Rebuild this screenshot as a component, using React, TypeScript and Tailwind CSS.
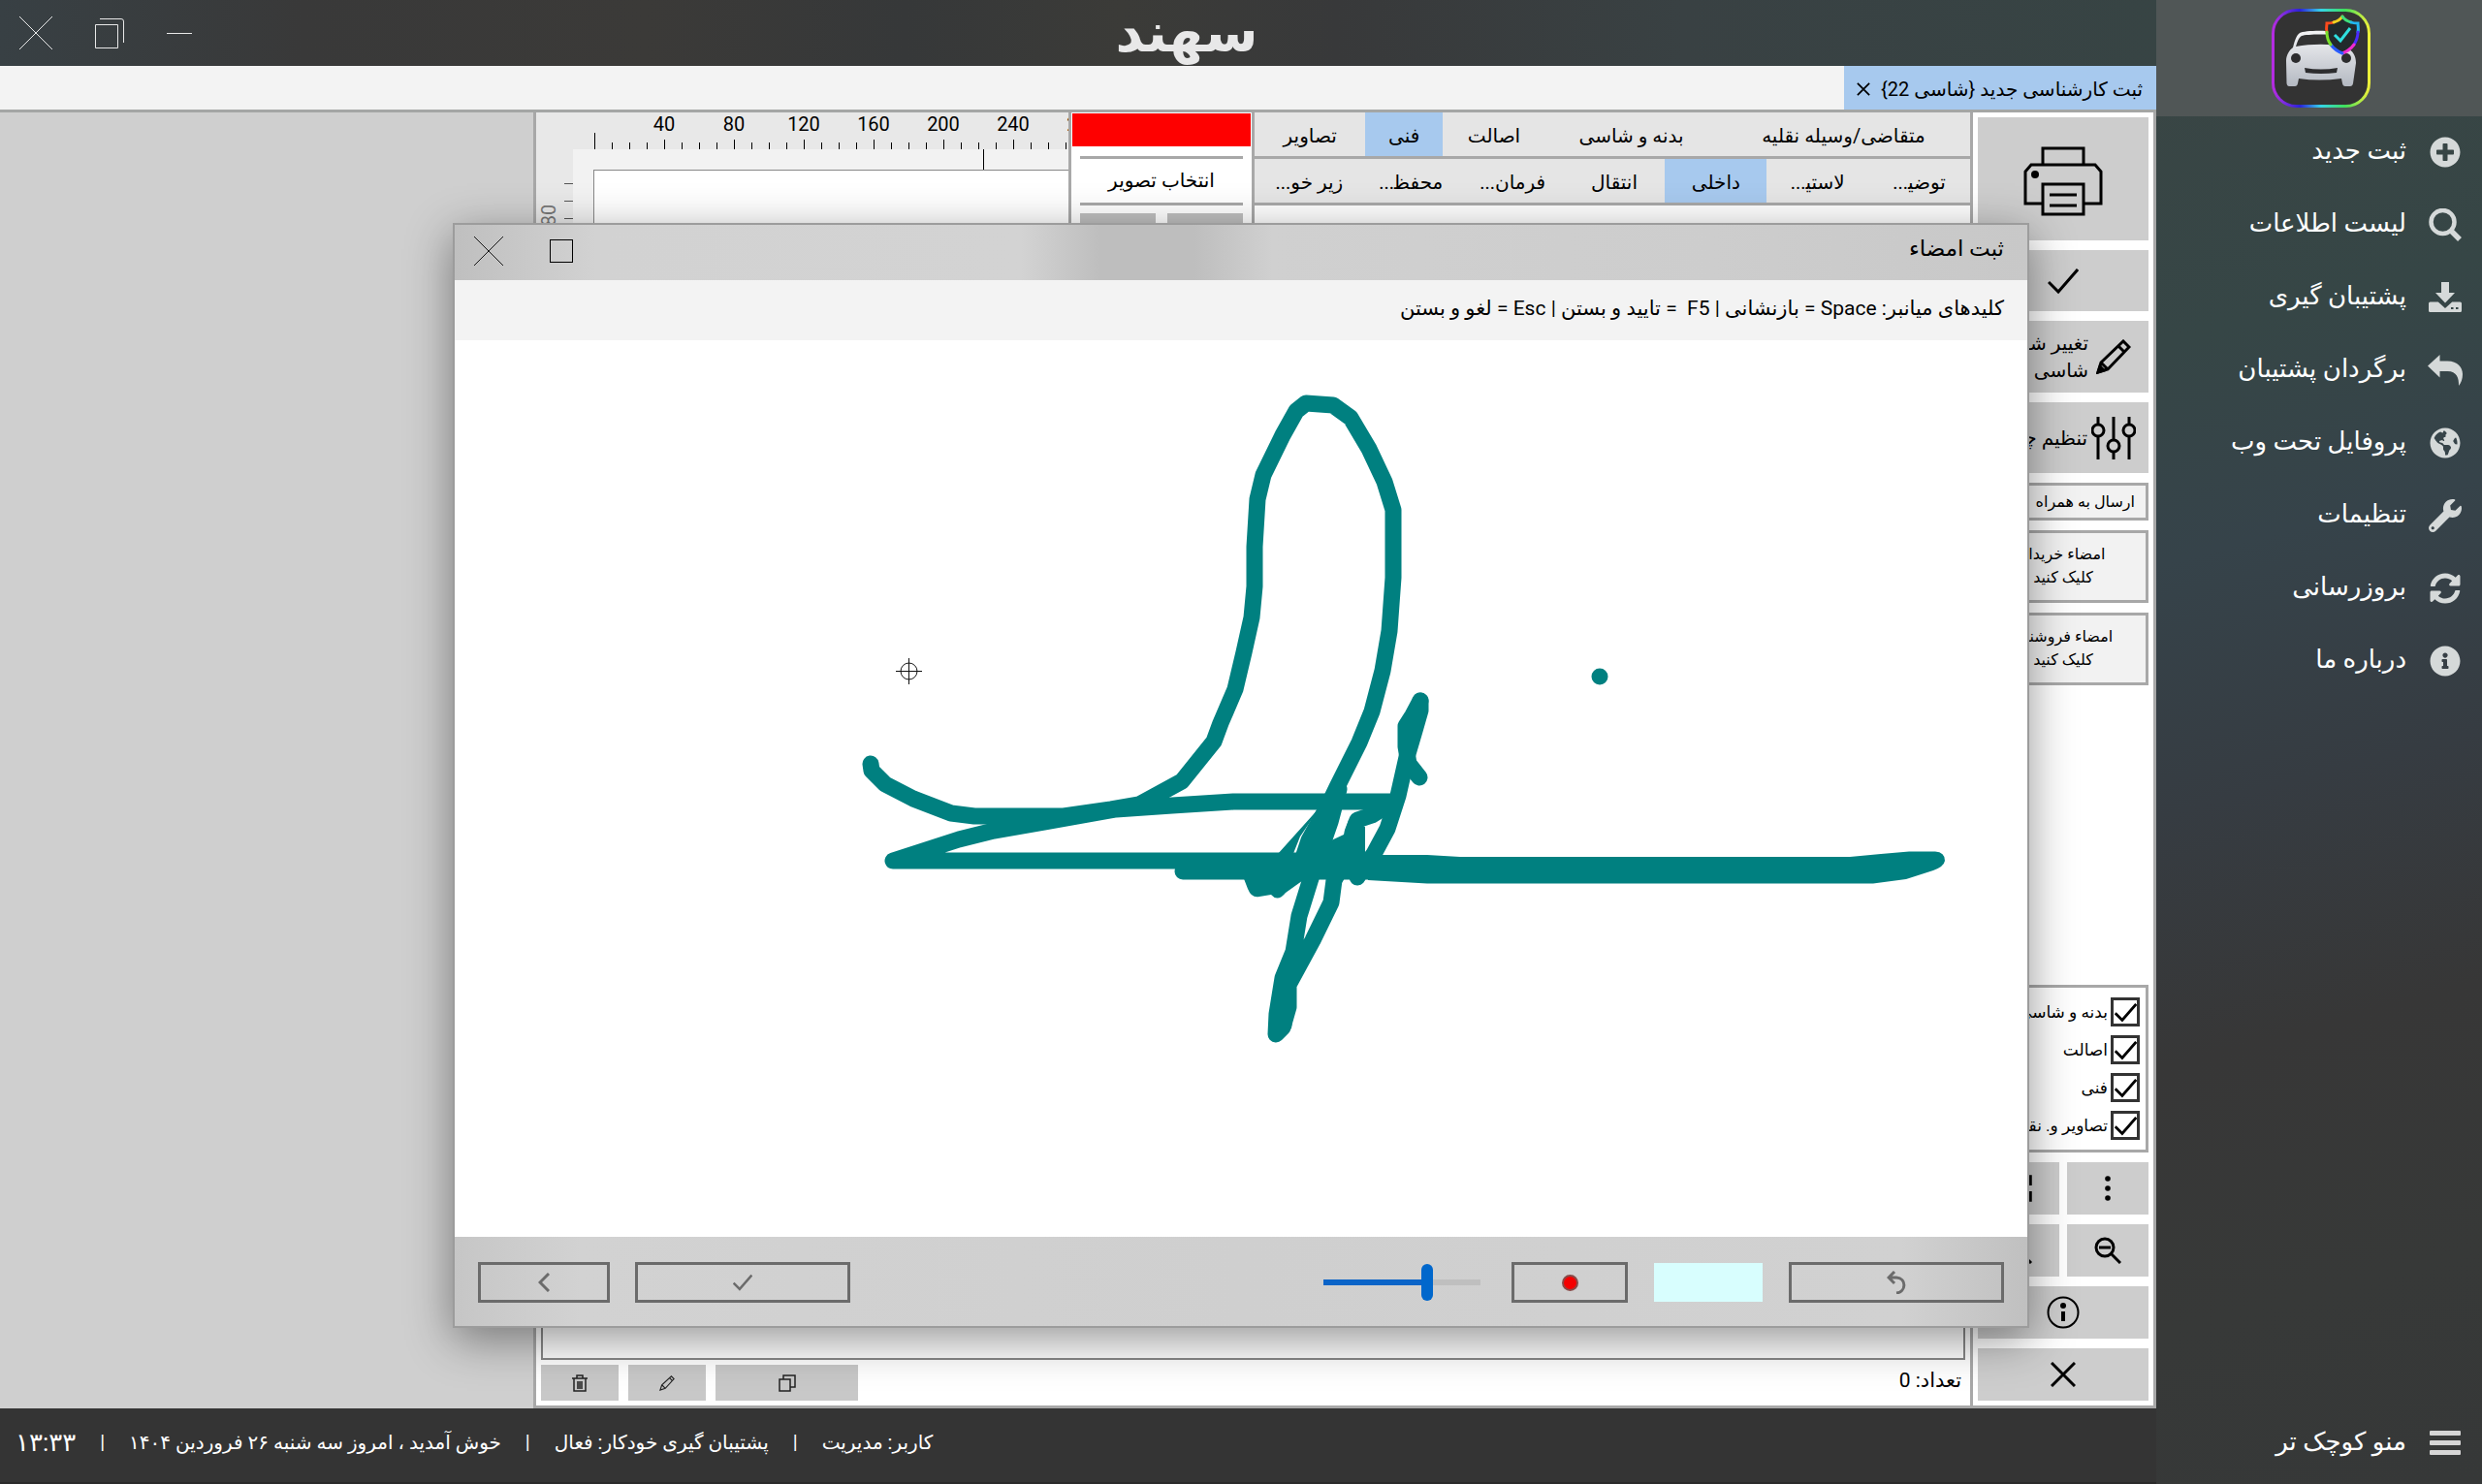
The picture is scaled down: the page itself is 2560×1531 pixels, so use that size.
import React, { useState } from 'react';
import { FaGlobeAmericas, FaInfoCircle, FaPlusCircle, FaSyncAlt, FaWrench } from 'react-icons/fa';

type IconProps = { className?: string };

const SearchIcon = ({ className }: IconProps) => (
  <svg viewBox="0 0 34 34" className={className} fill="none" stroke="currentColor">
    <circle cx="14.500" cy="14" r="12" strokeWidth="4.500" />
    <path d="M23 23l9 9" strokeWidth="5.500" />
  </svg>
);

const BackupIcon = ({ className }: IconProps) => (
  <svg viewBox="0 0 34 34" className={className} fill="currentColor">
    <path d="M13 1h8v11h6L17 22.500 7 12h6z" />
    <path fillRule="evenodd" d="M1.500 21.500h8.300L17 28l7.200-6.500h8.300q1.500 0 1.500 1.500v7.500q0 1.500-1.500 1.500h-31Q0 32 0 30.500V23q0-1.500 1.500-1.500zM23 27v2h2.500v-2zm5 0v2h2.500v-2z" />
  </svg>
);

const RestoreIcon = ({ className }: IconProps) => (
  <svg viewBox="0 0 36 34" className={className} fill="currentColor">
    <path d="M0 12.500L12.500 1v6.500h8C31 7.500 36 14 36 21c0 5-1.500 9-4 12 .3-8-2-15-11.500-15h-8v6.500z" />
  </svg>
);

const MenuIcon = ({ className }: IconProps) => (
  <svg viewBox="0 0 32 28" className={className} fill="currentColor">
    <rect width="32" height="5" y="1" rx="1" />
    <rect width="32" height="5" y="11" rx="1" />
    <rect width="32" height="5" y="21" rx="1" />
  </svg>
);

const CheckIcon = ({ className }: IconProps) => (
  <svg viewBox="0 0 32 32" className={className} fill="none" stroke="currentColor" strokeWidth="3">
    <path d="M1 17l10 10L31 4" />
  </svg>
);

const PencilIcon = ({ className }: IconProps) => (
  <svg viewBox="0 0 36 36" className={className} fill="none" stroke="currentColor" strokeWidth="3">
    <path d="M2 34l3-10L28 2l6 6-22 23zM5 24l7 7M23 7l6 6" />
    <path d="M2 34l2-6 4 4z" fill="currentColor" />
  </svg>
);

const PrinterIcon = () => (
  <svg viewBox="0 0 82 72" className="w-[82px] h-[72px]" fill="none" stroke="#000" strokeWidth="3">
    <path d="M20 19V2h42v17M20 59H2V26l6-7h66l6 7v33H62" />
    <path d="M20 39h42v31H20zM27 50h28M27 61h28" />
    <circle cx="12" cy="29" r="4" fill="#000" stroke="none" />
  </svg>
);

const SlidersIcon = () => (
  <svg viewBox="0 0 46 44" className="w-[46px] h-[44px] shrink-0" fill="none" stroke="#000" strokeWidth="3">
    <path d="M7 0v8M7 20v24M23 0v24M23 36v8M39 0v8M39 20v24" />
    <circle cx="7" cy="14" r="6" />
    <circle cx="23" cy="30" r="6" />
    <circle cx="39" cy="14" r="6" />
  </svg>
);

const CloseIcon = ({ className }: IconProps) => (
  <svg viewBox="0 0 34 34" className={className} fill="none" stroke="currentColor" strokeWidth="1">
    <path d="M0 0l34 34M34 0L0 34" />
  </svg>
);

const ZoomIcon = ({ plus }: { plus?: boolean }) => (
  <svg viewBox="0 0 28 28" className="w-7 h-7" fill="none" stroke="#000" strokeWidth="3">
    <circle cx="11" cy="11" r="9" />
    <path d="M5 11h12M17 17l10 10" />
    {plus && <path d="M11 5v12" />}
  </svg>
);

const AppLogo = () => (
  <svg viewBox="0 0 102 102" className="w-[102px] h-[102px]">
    <defs>
      <linearGradient id="ring" x1="0" x2="1" y1="0" y2="0">
        <stop offset="0" stopColor="#b52be0" />
        <stop offset=".12" stopColor="#7a2be0" />
        <stop offset=".28" stopColor="#2a22d8" />
        <stop offset=".5" stopColor="#35d5e8" />
        <stop offset=".75" stopColor="#3fe05a" />
        <stop offset="1" stopColor="#eef03a" />
      </linearGradient>
      <linearGradient id="car" x1="0" x2="0" y1="0" y2="1">
        <stop offset="0" stopColor="#f4f4f6" />
        <stop offset="1" stopColor="#b4b9c2" />
      </linearGradient>
    </defs>
    <rect x="1.500" y="1.500" width="99" height="99" rx="24" fill="#333" stroke="url(#ring)" strokeWidth="3" />
    <path
      fill="url(#car)"
      fillRule="evenodd"
      d="M22 40c2-8 4-13 7-15 5-3 35-3 42 0 4 2 7 8 9 17 5 3 7 8 7 14l-3 21q-.5 3-3 3h-5q-2.500 0-3-3l-1-5q-23 3-44 0l-1 5q-.5 3-3 3h-6q-2 0-2.500-3L15 54c0-6 3-11 7-14zM25 39c16-3 36-3 50 0-2-6-3-9-6-11-5-2-33-2-38 0-3 2-4 5-6 11z"
    />
    <ellipse cx="25" cy="51" rx="5" ry="5" fill="#2c2c2e" />
    <ellipse cx="77" cy="51" rx="5" ry="5" fill="#2c2c2e" />
    <path d="M34 61q17 3 34 0l-1 5q-16 2-32 0z" fill="#2c2c2e" />
    <path d="M73 8c4 5 10 7 16 7 2 13 0 24-16 31-16-7-18-18-16-31 6 0 12-2 16-7z" fill="#222a2c" />
    <g fill="none" strokeWidth="3" strokeLinecap="round">
      <path d="M57 24C56 20 57 17 57 15c3 0 5 0 7-1" stroke="#ff4a1c" />
      <path d="M64 14c4-1 7-3 9-6" stroke="#f0d020" />
      <path d="M73 8c2 3 5 5 9 6" stroke="#3fe07a" />
      <path d="M82 14c2 1 5 1 7 1 0 3 1 6 0 9" stroke="#22b8f0" />
      <path d="M89 24c0 4-1 8-4 13" stroke="#4a2bff" />
      <path d="M85 37c-3 4-7 7-12 9" stroke="#f02bd0" />
      <path d="M73 46c-5-2-9-5-12-9" stroke="#2a5cff" />
      <path d="M61 37c-3-4-4-8-4-13" stroke="#7ae02b" />
    </g>
    <path d="M65 27l6 6 10-13" fill="none" stroke="#2fe0e0" strokeWidth="3" />
  </svg>
);

const MENU = [
  { label: 'ثبت جدید', icon: FaPlusCircle, size: 'p-0.5' },
  { label: 'لیست اطلاعات', icon: SearchIcon, size: 'p-px' },
  { label: 'پشتیبان گیری', icon: BackupIcon, size: 'p-px' },
  { label: 'برگردان پشتیبان', icon: RestoreIcon, size: '' },
  { label: 'پروفایل تحت وب', icon: FaGlobeAmericas, size: 'p-0.5' },
  { label: 'تنظیمات', icon: FaWrench, size: 'p-px' },
  { label: 'بروزرسانی', icon: FaSyncAlt, size: 'p-0.5' },
  { label: 'درباره ما', icon: FaInfoCircle, size: 'p-0.5' },
];

const SECTIONS = [
  { label: 'متقاضی/وسیله نقلیه', grow: 'grow-[260]' },
  { label: 'بدنه و شاسی', grow: 'grow-[176]' },
  { label: 'اصالت', grow: 'grow-[106]' },
  { label: 'فنی', grow: 'grow-[79]' },
  { label: 'تصاویر', grow: 'grow-[114]' },
];

// \u200d keeps the cut letter in its joined form before the dots
const SUB_SECTIONS = ['توضی\u200d...', 'لاستی\u200d...', 'داخلی', 'انتقال', 'فرمان...', 'محفظ\u200d...', 'زیر خو...'];

const PRINT_PARTS = ['بدنه و شاسی', 'اصالت', 'فنی', 'تصاویر و. نقشه'];

const STATUS = ['کاربر: مدیریت', 'پشتیبان گیری خودکار: فعال', 'خوش آمدید ، امروز سه شنبه ۲۶ فروردین ۱۴۰۴'];

const TICK = 18;

function Ruler() {
  const ticks = Array.from({ length: 31 }, (_, i) => i);
  return (
    <svg className="w-full h-[38px] bg-[#e8e8e8] shrink-0" direction="ltr">
      {ticks.map((i) => (
        <rect key={i} x={60 + i * TICK} y={i === 0 ? 21 : i % 4 === 0 ? 28 : 31} width="1" height="20" fill="#000" />
      ))}
      {[40, 80, 120, 160, 200, 240, 280].map((n, i) => (
        <text key={n} x={132 + i * TICK * 4} y="19" textAnchor="middle" fontSize="20" fill="#000">
          {n}
        </text>
      ))}
    </svg>
  );
}

function SideRuler() {
  return (
    <svg className="w-[38px] h-full bg-[#e8e8e8] shrink-0">
      {[35, 53, 71, 89].map((y) => (
        <rect key={y} x="29" y={y} width="9" height="1" fill="#555" />
      ))}
      <text transform="translate(20 68) rotate(-90)" textAnchor="middle" fontSize="20" fill="#777">
        80
      </text>
    </svg>
  );
}

function Sidebar() {
  return (
    <aside className="w-[336px] shrink-0 flex flex-col text-white bg-[linear-gradient(165deg,#3a4544_0%,#364646_22%,#36434a_36%,#363c42_52%,#373737_68%,#373938_85%,#363838_100%)]">
      <div className="h-[120px] shrink-0 flex items-center justify-center bg-[#505656] pl-1">
        <AppLogo />
      </div>
      <nav className="flex flex-col">
        {MENU.map(({ label, icon: Icon, size }) => (
          <a key={label} href="#" className="h-[75px] flex items-center gap-[22px] pr-5 pb-0.5">
            <Icon className={`w-9 h-9 shrink-0 text-[#d5d9d9] ${size}`} />
            <span className="text-[26px] leading-9 pb-1">{label}</span>
          </a>
        ))}
      </nav>
      <button className="mt-auto h-[82px] flex items-center gap-[22px] pr-5 pb-0.5">
        <MenuIcon className="w-9 h-9 p-0.5 shrink-0 text-[#d5d5d5]" />
        <span className="text-[26px] leading-9 pb-1">منو کوچک تر</span>
      </button>
    </aside>
  );
}

function TitleBar() {
  return (
    <header className="h-[68px] shrink-0 flex items-center text-white bg-[linear-gradient(90deg,#384044_0%,#393939_14%,#3b3a38_30%,#363839_42%,#3b3b38_52%,#38393a_62%,#394143_78%,#374444_100%)]">
      <h1 className="flex-1 text-center text-[56px] leading-[66px] font-bold text-[#e8e8e8]">سهند</h1>
      <div className="w-56 flex items-center justify-end gap-11 pl-5 text-[#e8e8e8]">
        <button aria-label="کوچک کردن" className="w-[26px] h-px bg-[#e8e8e8]" />
        <button aria-label="بازگرداندن اندازه">
          <svg viewBox="0 0 30 31" className="w-[30px] h-[31px]" fill="none" stroke="currentColor">
            <path d="M.5 6.500h23v24H.5zM5 .5h22q2.500 0 2.500 2.500v22" />
          </svg>
        </button>
        <button aria-label="بستن">
          <CloseIcon className="w-[34px] h-[34px]" />
        </button>
      </div>
    </header>
  );
}

const toolButton = 'bg-[#cdcdcd] flex items-center justify-center shrink-0';
const toolBox = 'bg-[#f2f2f2] border-3 border-[#a8a8a8] shrink-0 text-base leading-6';

function ToolColumn() {
  return (
    <div className="w-[189px] shrink-0 border-l-3 border-[#a8a8a8] bg-white flex flex-col gap-[10px] p-[5px]">
      <button aria-label="چاپ" className={`${toolButton} h-[127px] pt-1`}>
        <PrinterIcon />
      </button>
      <button aria-label="تایید" className={`${toolButton} h-[63px]`}>
        <CheckIcon className="w-8 h-8" />
      </button>
      <button className={`${toolButton} h-[74px] pr-[18px] !justify-start gap-2 text-right text-xl leading-[28px]`}>
        <PencilIcon className="w-9 h-9 shrink-0" />
        <span className="whitespace-nowrap">
          تغییر شماره
          <br />
          شاسی
        </span>
      </button>
      <button className={`${toolButton} h-[73px] pr-[13px] !justify-start gap-1 text-xl whitespace-nowrap`}>
        <SlidersIcon />
        <span>تنظیم چاپ</span>
      </button>
      <button className={`${toolBox} h-[39px] text-right pr-[11px]`}>ارسال به همراه</button>
      <button className={`${toolBox} h-[75px] pb-0.5`}>
        امضاء خریدار
        <br />
        کلیک کنید
      </button>
      <button className={`${toolBox} h-[75px] pb-0.5`}>
        امضاء فروشنده
        <br />
        کلیک کنید
      </button>
      <div className="mt-auto h-[173px] shrink-0 border-3 border-[#a8a8a8] flex flex-col gap-[9px] pt-[10px] pr-[6px]">
        {PRINT_PARTS.map((part) => (
          <label key={part} className="flex items-center gap-[3px] text-[17px] leading-[30px] whitespace-nowrap">
            <span className="grid shrink-0">
              <input type="checkbox" defaultChecked className="peer col-start-1 row-start-1 appearance-none w-[30px] h-[30px] border-3 border-[#333] bg-white" />
              <CheckIcon className="col-start-1 row-start-1 self-center justify-self-center w-[23px] h-[23px] stroke-4 hidden peer-checked:block pointer-events-none" />
            </span>
            {part}
          </label>
        ))}
      </div>
      <div className="grid grid-cols-2 gap-x-2 gap-y-[10px]">
        <button aria-label="بیشتر" className={`${toolButton} h-[54px]`}>
          <svg viewBox="0 0 6 26" className="w-[6px] h-[26px]">
            <circle cx="3" cy="3" r="2.800" />
            <circle cx="3" cy="13" r="2.800" />
            <circle cx="3" cy="23" r="2.800" />
          </svg>
        </button>
        <button aria-label="تمام صفحه" className={`${toolButton} h-[54px]`}>
          <svg viewBox="0 0 28 28" className="w-7 h-7" fill="none" stroke="#000" strokeWidth="3.500">
            <path d="M2 11V2h9M17 2h9v9M26 17v9h-9M11 26H2v-9" />
          </svg>
        </button>
        <button aria-label="کوچک نمایی" className={`${toolButton} h-[54px]`}>
          <ZoomIcon />
        </button>
        <button aria-label="بزرگ نمایی" className={`${toolButton} h-[54px]`}>
          <ZoomIcon plus />
        </button>
      </div>
      <button aria-label="اطلاعات" className={`${toolButton} h-[54px]`}>
        <svg viewBox="0 0 34 34" className="w-[34px] h-[34px]" fill="none" stroke="#000">
          <circle cx="17" cy="17" r="15.500" strokeWidth="2" />
          <circle cx="17" cy="10" r="3" fill="#000" stroke="none" />
          <path d="M17 16v10" strokeWidth="4" />
        </svg>
      </button>
      <button aria-label="بستن فرم" className={`${toolButton} h-[54px]`}>
        <svg viewBox="0 0 26 26" className="w-[26px] h-[26px]" stroke="#000" strokeWidth="3">
          <path d="M1 1l24 24M25 1L1 25" />
        </svg>
      </button>
    </div>
  );
}

function Workspace() {
  return (
    <div className="flex-1 min-w-0 flex flex-col bg-white">
      <div className="flex-1 min-h-0 flex">
        <div className="grow-[738] basis-0 border-l-3 border-[#a8a8a8] text-xl">
          <div className="flex h-12 bg-[#e5e5e5] border-b-3 border-[#a8a8a8]">
            {SECTIONS.map(({ label, grow }) => (
              <button key={label} className={`${grow} basis-0 pt-0.5 whitespace-nowrap ${label === 'فنی' ? 'bg-[#a7c9ee]' : ''}`}>
                {label}
              </button>
            ))}
          </div>
          <div className="flex h-12 bg-[#e5e5e5] border-b-3 border-[#a8a8a8] pl-1">
            {SUB_SECTIONS.map((label) => (
              <button key={label} className={`flex-1 pt-0.5 whitespace-nowrap ${label === 'داخلی' ? 'bg-[#a7c9ee]' : ''}`}>
                {label}
              </button>
            ))}
          </div>
        </div>
        <div className="grow-[186] basis-0 border-l-3 border-[#a8a8a8] flex flex-col">
          <div className="h-[34px] mt-px mx-px bg-[#fe0000]" />
          <button className="mx-[9px] mt-[10px] h-[51px] border-y-3 border-[#a8a8a8] pb-0.5 text-xl">انتخاب تصویر</button>
          <div className="mx-[9px] mt-2 grid grid-cols-2 gap-3">
            <button aria-label="تصویر قبلی" className="h-12 bg-[#bfbfbf]" />
            <button aria-label="تصویر بعدی" className="h-12 bg-[#bfbfbf]" />
          </div>
        </div>
        <div className="grow-[549] basis-0 min-w-0 flex flex-col">
          <Ruler />
          <div className="flex-1 flex flex-row-reverse bg-[#f2f2f2]">
            <SideRuler />
            <div className="flex-1 flex flex-col pl-[21px]">
              <div className="h-[21px] w-px mr-[87px] bg-black" />
              <div className="flex-1 bg-white border-t border-l border-[#888]" />
            </div>
          </div>
        </div>
      </div>
      <div className="px-[5px]">
        <div className="h-[120px] border-2 border-[#888]" />
        <div className="flex items-center h-[47px]">
          <span className="pr-1 pb-1 text-[21px]">تعداد: 0</span>
          <div className="mr-auto flex gap-[10px]">
            <button aria-label="کپی" className="w-[147px] h-[37px] bg-[#c8c8c8] flex items-center justify-center">
              <svg viewBox="0 0 18 18" className="w-[18px] h-[18px]" fill="none" stroke="#222" strokeWidth="1.500">
                <path d="M1 5h11v12H1zM5 5V1h12v12h-5" />
              </svg>
            </button>
            <button aria-label="ویرایش" className="w-20 h-[37px] bg-[#c8c8c8] flex items-center justify-center">
              <svg viewBox="0 0 18 18" className="w-4 h-4" fill="none" stroke="#222" strokeWidth="1.300">
                <path d="M1 17l2-6L14 1l3 3L7 15zM3 11l4 4M12 3l3 3" />
              </svg>
            </button>
            <button aria-label="حذف" className="w-20 h-[37px] bg-[#c8c8c8] flex items-center justify-center">
              <svg viewBox="0 0 16 18" className="w-4 h-[18px]" fill="none" stroke="#222" strokeWidth="1.500">
                <path d="M0 4h16M5 4V1h6v3M2 4v13h12V4M6 7v8M8 7v8M10 7v8" />
              </svg>
            </button>
          </div>
        </div>
      </div>
    </div>
  );
}

function SignatureCanvas() {
  return (
    <svg viewBox="0 0 1622 925" className="flex-1 min-h-0 w-full bg-white">
      <g fill="none" stroke="#008080" strokeWidth="17" strokeLinecap="round" strokeLinejoin="round">
        <polyline points="429,437 430,444 444,458 473,473 512,488 536,491 628,491 677,484 706,479 750,455 783,414 790,395 805,360 814,322 822,286 825,254 825,213 828,164 834,139 854,98 868,73 878,65 906,67 924,80 943,112 959,146 968,175 968,245 964,300 957,341 946,383 933,415 910,461 900,482 881,516 874,537" />
        <polyline points="912,463 903,497 884,552 871,594 865,631 854,658 848,695 847,716 854,709 860,688 860,665 885,619 904,580 907,557 922,530" />
        <polyline points="968,476 803,476 740,480 682,484 609,497 556,506 520,515 452,537 948,537" />
        <polyline points="751,548 960,548" />
        <polyline points="996,372 996,382 990,403 982,430 973,470 962,504 948,530 932,552" />
        <polyline points="996,372 988,387 981,398 981,419 984,437 995,451" />
        <polyline points="962,480 946,490 931,495 926,508 930,530 931,554" />
      </g>
      <g fill="#008080">
        <path d="M893 481L872 512 864 532 902 517 917 510 922 495 939 502V555H878L857 570Q849 580 842 572L830 574Q822 576 818 566L813 553 840 540z" />
        <path d="M940 531L1003 531 1037 533H1439L1471 530 1500 527.500H1527Q1537 528 1537 537 1536 543 1525 547L1497 556 1463 560.500H1003L942 557z" />
        <path d="M848 660L868 668 863 710 848 715z" />
        <path d="M996 372L985 390 977 410 986 425 997 385z" />
        <circle cx="1181" cy="347" r="8.500" />
      </g>
      <g fill="none" stroke="#111" strokeWidth="1">
        <circle cx="468.500" cy="341.500" r="8.500" />
        <path d="M455 341.500h27M468.500 328v27" />
      </g>
    </svg>
  );
}

const dialogButton = 'h-[42px] border-3 border-[#6b6b6b] text-[#6b6b6b] flex items-center justify-center';

function SignatureDialog() {
  const [thickness, setThickness] = useState(67);
  return (
    <section
      role="dialog"
      aria-label="ثبت امضاء"
      className="absolute left-[467px] right-[131px] top-[230px] bottom-[161px] flex flex-col border-2 border-[#9c9c9c] shadow-[0_12px_44px_rgba(0,0,0,0.42)]"
    >
      <header className="h-[57px] shrink-0 flex items-center pr-6 pl-5 pb-1 bg-[linear-gradient(90deg,#bfbfbf_0%,#d2d2d2_9%,#d3d3d3_36%,#bebebe_41%,#bebebe_47%,#d0d0d0_52%,#cdcdcd_80%,#c8c8c8_100%)]">
        <h2 className="text-[23px] leading-8 pb-1">ثبت امضاء</h2>
        <button aria-label="بزرگ کردن" className="mr-auto w-6 h-6 border border-black" />
        <button aria-label="بستن پنجره" className="mr-12">
          <CloseIcon className="w-[30px] h-[30px]" />
        </button>
      </header>
      <p className="h-[62px] shrink-0 flex items-center pr-6 pb-0.5 bg-[#f3f3f3] text-[21px]">
        <span>
          کلیدهای میانبر: Space = بازنشانی | F5&nbsp; = تایید و بستن | Esc = لغو و بستن
        </span>
      </p>
      <SignatureCanvas />
      <footer className="h-[92px] shrink-0 flex items-center px-6 pt-0.5 bg-[linear-gradient(90deg,#c6c6c6_0%,#d2d2d2_8%,#cfcfcf_50%,#d1d1d1_92%,#c0c0c0_100%)]">
        <button aria-label="بازنشانی" className={`${dialogButton} w-[222px]`}>
          <svg viewBox="0 0 20 24" className="w-5 h-6" fill="none" stroke="currentColor" strokeWidth="3">
            <path d="M8 1L2 7l6 6M2 7h8c11 1 10 15 0 16" />
          </svg>
        </button>
        <label className="mr-[27px] w-28 h-10 bg-[#d8fefe]">
          <input type="color" aria-label="رنگ زمینه" defaultValue="#d8fefe" className="block w-full h-full opacity-0" />
        </label>
        <button aria-label="ضبط" className={`${dialogButton} mr-[27px] w-[120px]`}>
          <span className="w-[17px] h-[17px] rounded-full bg-[#f40000] border-2 border-[#8a4a48]" />
        </button>
        <input
          type="range"
          aria-label="ضخامت قلم"
          dir="ltr"
          value={thickness}
          onChange={(e) => setThickness(Number(e.target.value))}
          style={{ backgroundImage: `linear-gradient(90deg, #0a64c8 ${thickness}%, #bfbfbf ${thickness}%)` }}
          className="mr-8 w-[162px] h-[6px] appearance-none [&::-webkit-slider-thumb]:appearance-none [&::-webkit-slider-thumb]:w-3 [&::-webkit-slider-thumb]:h-[38px] [&::-webkit-slider-thumb]:rounded-full [&::-webkit-slider-thumb]:bg-[#0067cc]"
        />
        <button aria-label="تایید و بستن" className={`${dialogButton} mr-auto w-[222px]`}>
          <CheckIcon className="w-5 h-5 stroke-4" />
        </button>
        <button aria-label="لغو و بستن" className={`${dialogButton} mr-[26px] w-[136px]`}>
          <svg viewBox="0 0 12 20" className="w-3 h-5" fill="none" stroke="currentColor" strokeWidth="3">
            <path d="M11 1L2 10l9 9" />
          </svg>
        </button>
      </footer>
    </section>
  );
}

export default function App() {
  return (
    <div dir="rtl" className="h-screen flex overflow-hidden bg-[#343434] text-black font-['Roboto','DejaVu_Sans',sans-serif]">
      <Sidebar />
      <div className="relative flex-1 min-w-0 flex flex-col">
        <TitleBar />
        <div className="h-12 shrink-0 flex bg-[#f3f3f3] border-b-3 border-[#a4a6a5]">
          <div className="w-[322px] flex items-center justify-between pr-[14px] pl-3 pt-0.5 bg-[#a7c9ee] text-xl">
            <span className="whitespace-nowrap">{'ثبت کارشناسی جدید {شاسی 22}'}</span>
            <button aria-label="بستن زبانه">
              <svg viewBox="0 0 16 16" className="w-4 h-[14px]" stroke="#000" strokeWidth="2">
                <path d="M1 1l14 14M15 1L1 15" />
              </svg>
            </button>
          </div>
        </div>
        <main className="flex-1 min-h-0 flex bg-[#cfcfcf]">
          <div className="grow-[1668] basis-0 min-w-0 flex border-x-3 border-b-3 border-[#a8a8a8]">
            <ToolColumn />
            <Workspace />
          </div>
          <div className="grow-[550] basis-0" />
        </main>
        <footer className="h-[78px] shrink-0 flex items-center justify-end pl-4 pb-1.5 bg-[#343434] border-b-2 border-[#2a2a2a] text-white text-xl">
          {STATUS.map((item) => (
            <React.Fragment key={item}>
              <span className="whitespace-nowrap">{item}</span>
              <span className="mx-[25px]">|</span>
            </React.Fragment>
          ))}
          <time className="text-[26px] leading-8">۱۳:۳۳</time>
        </footer>
        <SignatureDialog />
      </div>
    </div>
  );
}
